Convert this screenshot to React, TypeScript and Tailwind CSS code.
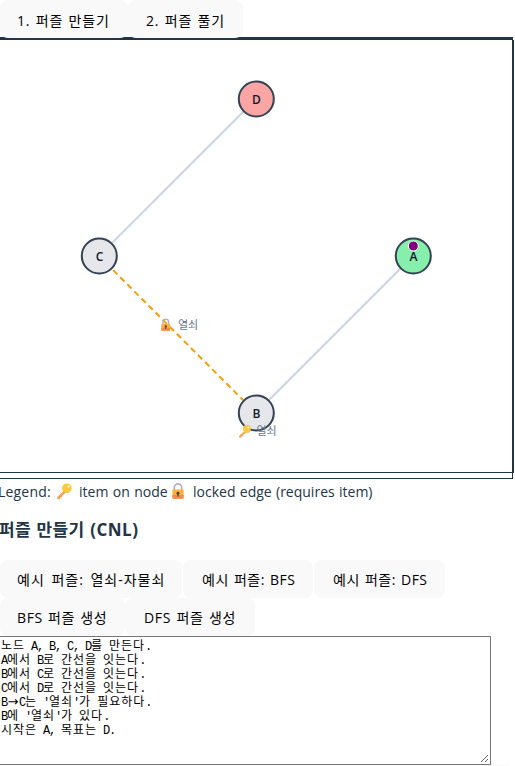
import React from 'react';

function KeyShape() {
  return (
    <g>
      <path d="M8.8 7.2 1.2 14.2l.3 1.7 2.4-.1.4-1.5 1.6-.4.4-1.5 4.4-3.7z" fill="#f4904a" />
      <path d="M8.8 7.2 1.1 14.3l.6.9 8.5-7.3z" fill="#f7b056" />
      <circle cx="10.9" cy="5.2" r="4.8" fill="#fcc83c" />
      <path d="M6.8 7.6a4.8 4.8 0 0 0 7.9.5 5 5 0 0 1-7.9-.5z" fill="#f8a83c" />
      <circle cx="12.6" cy="3.6" r="1.1" fill="#fff" />
    </g>
  );
}

function LockShape() {
  return (
    <g>
      <path d="M4.3 7.5V4.6a3.7 3.7 0 0 1 7.4 0v2.9" fill="none" stroke="#b4acbc" strokeWidth="1.7" />
      <rect x="2.4" y="6.6" width="11.2" height="9.2" rx="1.2" fill="#fbb13c" />
      <path d="M2.4 12h11.2v2.6a1.2 1.2 0 0 1-1.2 1.2H3.6a1.2 1.2 0 0 1-1.2-1.2z" fill="#f58a4b" />
      <circle cx="8" cy="10.2" r="1.4" fill="#433b45" />
      <path d="M7.4 10.4h1.2v3.2H7.4z" fill="#433b45" />
    </g>
  );
}

function Button({ className, children }: { className: string; children: React.ReactNode }) {
  return (
    <button className={`h-[38px] shrink-0 rounded-lg bg-[#f9f9f9] text-left text-[14px] whitespace-nowrap text-black ${className}`}>
      {children}
    </button>
  );
}

function Node({ x, y, label, fill }: { x: number; y: number; label: string; fill: string }) {
  return (
    <g>
      <circle cx={x + 0.3} cy={y} r="17.5" fill={fill} stroke="#334155" strokeWidth="2" />
      <text x={x + 0.5} y={y + 5} textAnchor="middle" className="fill-[#0f172a] text-[12px] font-semibold">{label}</text>
    </g>
  );
}

function Graph() {
  return (
    <svg width="512" height="432" viewBox="0 40 512 432" className="block">
      <g stroke="#cbd5e1" strokeWidth="2">
        <path d="M256 99 99 256M413 256 256 413" />
      </g>
      <path d="M99 256 256 413" stroke="#f59e0b" strokeWidth="2" strokeDasharray="6 4" />
      <Node x={413} y={256} label="A" fill="#86efac" />
      <Node x={256} y={413} label="B" fill="#e5e7eb" />
      <Node x={99} y={256} label="C" fill="#e5e7eb" />
      <Node x={256} y={99} label="D" fill="#fca5a5" />
      <circle cx="413.3" cy="246" r="5" fill="#800080" stroke="#fff" strokeWidth="1" />
      <g transform="translate(159.5 318.5) scale(.78)"><LockShape /></g>
      <text x="178" y="329" textLength="20" className="fill-[#64748b] text-[11px]">열쇠</text>
      <g transform="translate(238 424.5) scale(.82)"><KeyShape /></g>
      <text x="256.5" y="435" textLength="20" className="fill-[#64748b] text-[11px]">열쇠</text>
    </svg>
  );
}

const source = [
  '노드 A, B, C, D를 만든다.',
  'A에서 B로 간선을 잇는다.',
  'B에서 C로 간선을 잇는다.',
  'C에서 D로 간선을 잇는다.',
  "B→C는 '열쇠'가 필요하다.",
  "B에 '열쇠'가 있다.",
  '시작은 A, 목표는 D.',
];

function SourceLine({ line }: { line: string }) {
  const runs = line.match(/[가-힣]+|→|[^가-힣→]+/g) ?? [];
  return (
    <div className="h-[14px] whitespace-pre">
      {runs.map((run, i) =>
        /[가-힣]/.test(run) ? (
          <span key={i} className="font-['Noto_Sans_CJK_KR',sans-serif] tracking-[0.96px]">{run}</span>
        ) : run === '→' ? (
          <span key={i} className="inline-block w-3 text-center font-['DejaVu_Sans',sans-serif] text-[13px] leading-[12px]">→</span>
        ) : (
          <span key={i} className="tracking-[-1.2px]">{run}</span>
        ),
      )}
    </div>
  );
}

export default function App() {
  return (
    <main className="h-[766px] w-[515px] overflow-hidden bg-white font-['Open_Sans','Noto_Sans_CJK_KR',sans-serif] text-[#213547]">
      <nav className="relative z-10 flex h-[37px] items-start">
        <Button className="w-[128px] pt-[2px] pl-[17px] tracking-[0.8px] [word-spacing:1px]">1. 퍼즐 만들기</Button>
        <Button className="w-[115px] pt-[2px] pl-[18px] tracking-[0.8px] [word-spacing:1px]">2. 퍼즐 풀기</Button>
      </nav>
      <div className="h-[3px] w-[513px] bg-[#213547]" />
      <div className="h-[439px] w-[513px] border-r border-b border-[#213547]">
        <div className="h-[433px] w-[514px] border-r-2 border-b border-[#213547]">
          <Graph />
        </div>
      </div>
      <div className="flex h-6 items-center text-[14px] whitespace-nowrap">
        <span className="-ml-[2px] w-[58px] tracking-[0.2px]">Legend:</span>
        <svg width="16" height="16" viewBox="0 0 16 16"><KeyShape /></svg>
        <span className="ml-[7px] w-[91px] [word-spacing:0.8px]">item on node</span>
        <svg width="16" height="16" viewBox="0 0 16 16"><LockShape /></svg>
        <span className="ml-[7px] [word-spacing:0.7px]">locked edge (requires item)</span>
      </div>
      <h2 className="mt-[14px] -ml-px h-[43px] text-[17px] leading-[26px] font-semibold tracking-[0.3px] whitespace-nowrap [word-spacing:1px]">
        퍼즐 만들기 <span className="font-bold tracking-[0.5px]">(CNL)</span>
      </h2>
      <div className="flex gap-px">
        <Button className="w-[182px] pl-[17px] tracking-[1px] [word-spacing:2px]">예시 퍼즐: 열쇠-자물쇠</Button>
        <Button className="w-[130px] pl-[19px] tracking-[0.5px] [word-spacing:1px]">예시 퍼즐: BFS</Button>
        <Button className="w-[131px] pl-[19px] tracking-[0.5px] [word-spacing:1px]">예시 퍼즐: DFS</Button>
      </div>
      <div className="flex">
        <Button className="w-[125px] pl-[17px] tracking-[0.6px] [word-spacing:1px]">BFS 퍼즐 생성</Button>
        <Button className="w-[130px] pl-[19px] tracking-[0.7px] [word-spacing:1px]">DFS 퍼즐 생성</Button>
      </div>
      <div className="flex h-[129px] w-[491px] items-end justify-between border-y border-r border-[#767676] bg-white">
        <div className="self-start pt-px pl-px font-['Liberation_Mono','Noto_Sans_CJK_KR',monospace] text-[12px] leading-[14px] text-black">
          {source.map((line) => <SourceLine key={line} line={line} />)}
        </div>
        <svg width="9" height="9" viewBox="0 0 9 9" className="mr-px mb-px" stroke="#666">
          <path d="M1 8 8 1M5 8 8 5" />
        </svg>
      </div>
      <div className="ml-[491px] h-px w-[18px] bg-[#f9f9f9]" />
    </main>
  );
}
